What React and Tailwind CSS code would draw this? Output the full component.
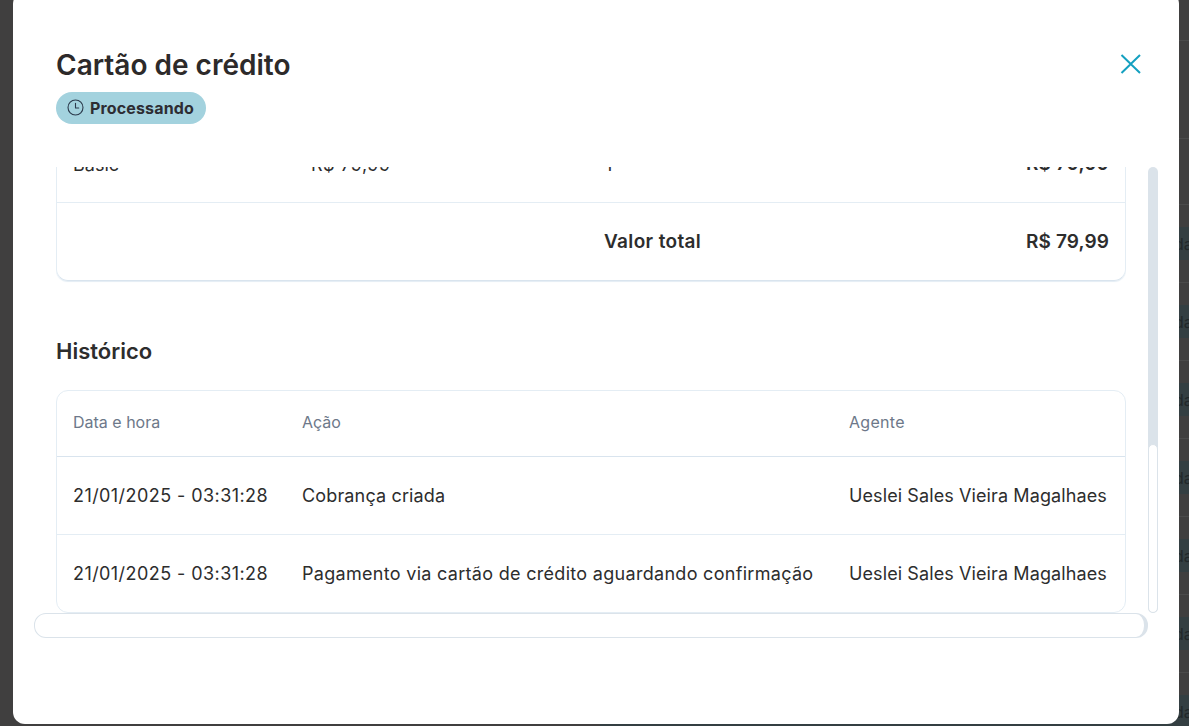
const rows = [0, 1, 2, 3, 4, 5, 6];

function CloseIcon() {
  return (
    <svg width="24" height="24" viewBox="0 0 24 24" fill="none" stroke="#14a0c0" strokeWidth="2">
      <path d="M2.5 3 L21 21 M21 3 L2.5 21" />
    </svg>
  );
}

function ClockIcon() {
  return (
    <svg width="18" height="18" viewBox="0 0 18 18" fill="none" stroke="#2b3a4c" strokeWidth="1.1" strokeLinecap="round" strokeLinejoin="round">
      <circle cx="9.5" cy="8.5" r="7.5" />
      <path d="M9.5 4.3 V9 H12.7" />
    </svg>
  );
}

function HistoryRow({ action, actionClass, last }) {
  return (
    <div className={`flex items-center pb-[1px] text-[18px] text-[#2d2d2d] ${last ? "h-[77px]" : "h-[78px] border-b border-[#e4edf4]"}`}>
      <div className="w-[245px] pl-4 tracking-[0.43px]">21/01/2025 - 03:31:28</div>
      <div className={`w-[547px] ${actionClass}`}>{action}</div>
      <div className="tracking-[0.1px]">Ueslei Sales Vieira Magalhaes</div>
    </div>
  );
}

export default function App() {
  return (
    <div className="relative h-[726px] w-full overflow-hidden bg-[#403f3f] font-['Inter',sans-serif]">
      <div className="ml-[600px] flex flex-col">
        <div className="h-[41px] border-b border-[#4b4b4b]" />
        <div className="h-[98px] border-b border-[#4b4b4b]" />
        <div className="h-[66px] border-b border-[#4b4b4b]" />
        {rows.map((r) => (
          <div key={r} className="flex h-[78px] items-center border-b border-[#4b4b4b]">
            <div className="flex h-[33px] w-full items-center bg-[#343f42] pl-[574px] text-[16px] text-[#22282a]">
              da
            </div>
          </div>
        ))}
      </div>

      <div className="absolute top-[-8px] left-[13px] flex h-[732px] w-[1166px] flex-col rounded-[12px] bg-white">
        <div className="flex items-start justify-between pt-[53px] pr-[36px] pl-[43px]">
          <div className="flex flex-col items-start">
            <h1 className="h-[40px] text-[28px] leading-[40px] font-semibold text-[#2d2a2a]">Cartão de crédito</h1>
            <div className="mt-[7px] flex h-[32px] w-[150px] items-center gap-[6px] rounded-full bg-[#a3d2de] pl-[10px] text-[16px] font-bold tracking-[0.15px] text-[#2d2d33]">
              <ClockIcon />
              <span>Processando</span>
            </div>
          </div>
          <button className="mt-[7px] flex">
            <CloseIcon />
          </button>
        </div>

        <div className="mt-[43px] flex h-[446px] items-stretch pl-[43px]">
          <div className="h-full w-[1070px] overflow-hidden">
            <div className="-mt-[43px] rounded-[12px] border border-[#e4edf4] border-b-[#d9e4ee] shadow-[0_1px_1px_#e4edf4]">
              <div className="flex h-[78px] items-center border-b border-[#e4edf4] pt-[1px] text-[18px] text-[#2d2d2d]">
                <div className="w-[254px] pl-4">Basic</div>
                <div className="w-[294px] tracking-[0.4px]">R$ 79,99</div>
                <div className="flex-1">1</div>
                <div className="pr-4 text-[19px] font-semibold tracking-[0.1px]">R$ 79,99</div>
              </div>
              <div className="flex h-[77px] items-center pt-[2px] text-[19px] font-semibold tracking-[0.35px] text-[#2d2d2d]">
                <div className="w-[547px]" />
                <div className="flex-1">Valor total</div>
                <div className="pr-4 tracking-[0.1px]">R$ 79,99</div>
              </div>
            </div>

            <h2 className="mt-[52px] h-[36px] text-[22px] leading-[36px] font-semibold text-[#2d2d2d]">Histórico</h2>

            <div className="mt-[21px] rounded-[12px] border border-[#e4edf4]">
              <div className="flex h-[66px] items-center border-b border-[#d9e4ee] pb-[3px] text-[16px] text-[#6d7889]">
                <div className="w-[245px] pl-4">Data e hora</div>
                <div className="w-[547px]">Ação</div>
                <div className="tracking-[0.3px]">Agente</div>
              </div>
              <HistoryRow action="Cobrança criada" actionClass="tracking-[0.15px]" />
              <HistoryRow action="Pagamento via cartão de crédito aguardando confirmação" actionClass="tracking-[0.3px]" last />
            </div>
          </div>

          <div className="ml-[22px] flex h-full w-[10px] flex-col rounded-[5px] bg-[#dbe3ea]">
            <div className="mt-auto h-[169px] rounded-[5px] border border-[#dbe3ea] bg-white" />
          </div>
        </div>

        <div className="ml-[21px] h-[25px] w-[1114px] rounded-[12px] border border-[#dbe3ea] border-r-[4px] bg-white" />
      </div>
    </div>
  );
}
